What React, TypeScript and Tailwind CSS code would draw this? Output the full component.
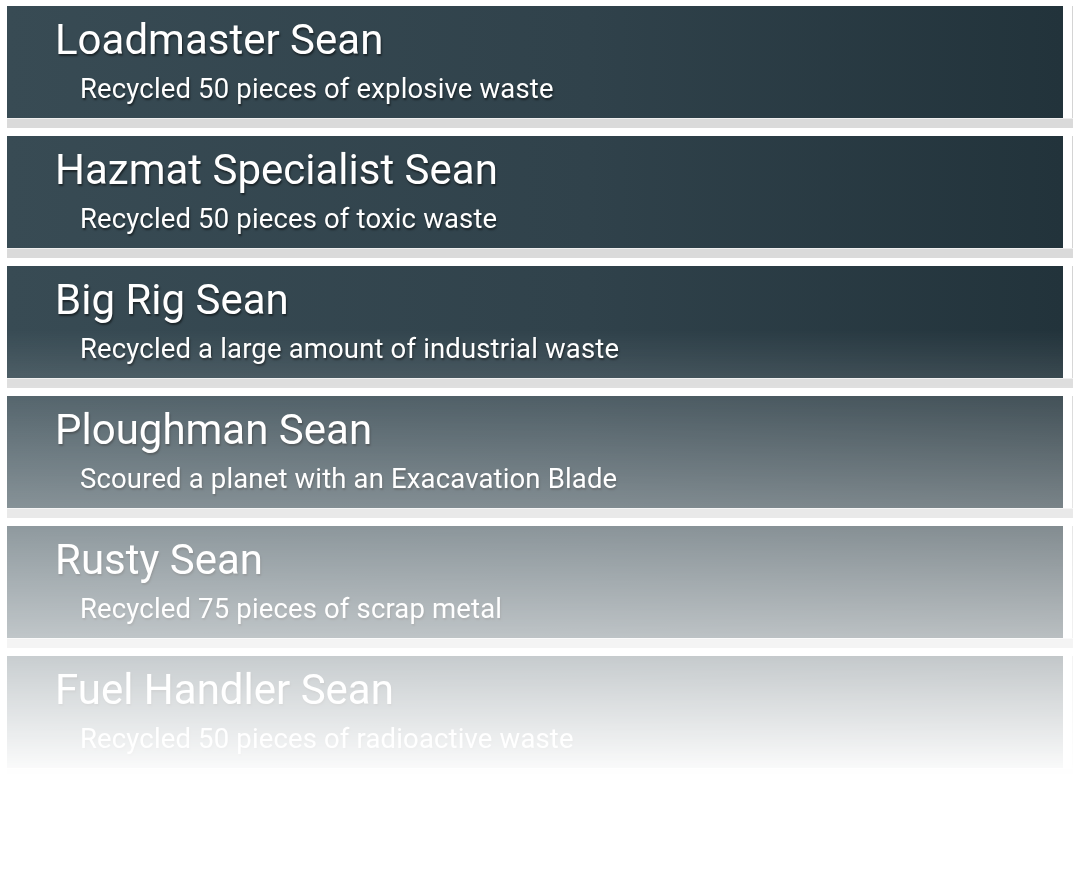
const medals = [
  { title: "Loadmaster Sean", text: "Recycled 50 pieces of explosive waste" },
  { title: "Hazmat Specialist Sean", text: "Recycled 50 pieces of toxic waste" },
  { title: "Big Rig Sean", text: "Recycled a large amount of industrial waste" },
  { title: "Ploughman Sean", text: "Scoured a planet with an Exacavation Blade" },
  { title: "Rusty Sean", text: "Recycled 75 pieces of scrap metal" },
  { title: "Fuel Handler Sean", text: "Recycled 50 pieces of radioactive waste" },
];

function MedalRow({ title, text }: { title: string; text: string }) {
  return (
    <div className="flex flex-col">
      <div className="flex h-[112px]">
        <div className="flex-1 bg-[linear-gradient(to_right,#384b54,#30424b_55%,#22333b)] pl-[48px] pt-[13px] font-normal text-white [text-shadow:1px_2px_2px_rgba(0,0,0,0.5)]">
          <div className="text-[42px] leading-[42px]">{title}</div>
          <div className="mt-[14px] pl-[25px] text-[27.5px] leading-[28px] tracking-[0.15px]">{text}</div>
        </div>
        <div className="w-[10px] border-r border-[#d4d4d4] bg-white" />
      </div>
      <div className="h-[10px] border-t border-[#eeeeee] bg-[#dadada]" />
    </div>
  );
}

export default function App() {
  return (
    <div className="min-h-[871px] bg-white font-[Roboto,Arial,sans-serif]">
      <div className="flex flex-col gap-[8px] px-[7px] pt-[6px] [mask-image:linear-gradient(to_bottom,black_330px,transparent_780px)]">
        {medals.map((m) => (
          <MedalRow key={m.title} title={m.title} text={m.text} />
        ))}
      </div>
    </div>
  );
}
